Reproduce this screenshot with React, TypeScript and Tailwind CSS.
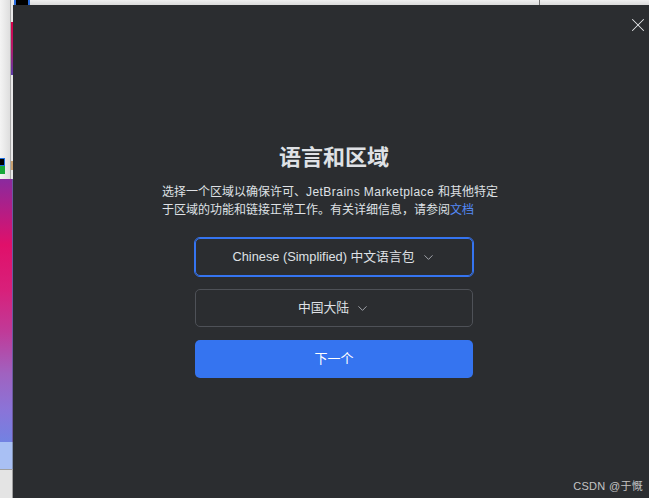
import { ChevronDown, X } from "lucide-react";

const font = "font-['Liberation_Sans','Noto_Sans_CJK_SC',sans-serif]";

const LeftStrip = () => {
  return (
    <div className="flex flex-col w-[13px] h-full shrink-0">
      <div className="flex h-[179px]">
        <div className="flex flex-col w-[10px] bg-[linear-gradient(to_right,#f4f4f4,#dedede)]">
          <div className="h-[158px]" />
          <div className="w-[5px] h-[8px] bg-black border border-[#1f6fe0] border-l-0" />
          <div className="w-[5px] h-[8px] bg-[#19a83a]" />
        </div>
        <div className="w-[1px] bg-[#a8a8a8]" />
        <div className="flex flex-col w-[2px] bg-[#e8e8e8]">
          <div className="h-[22px]" />
          <div className="h-[53px] bg-[linear-gradient(to_bottom,#d8004a,#b21a6a,#5b3aa8)]" />
          <div className="h-[86px]" />
          <div className="h-[9px] bg-[#c8a070]" />
        </div>
      </div>
      <div className="h-[263px] border-r border-[#6a5aa0] bg-[linear-gradient(to_bottom,#8a2a9e_0%,#e0106a_25%,#d8207a_42%,#c03a98_58%,#a062c0_74%,#8a74d8_88%,#7282e2_100%)]" />
      <div className="h-[27px] border-r border-[#8090b0] bg-[#a9c0f4]" />
      <div className="flex-1 border-t border-[#a0a0a0] border-r bg-[#e4e4e4]" />
    </div>
  );
};

const Dropdown = ({ label, focused }: { label: string; focused?: boolean }) => {
  return (
    <div
      className={
        focused
          ? "flex items-center justify-center gap-[6px] w-[278px] h-[38px] rounded-[5px] border border-[#3574f0] outline outline-1 outline-[#3574f0] text-[12.8px] text-[#dfe1e5]"
          : "flex items-center justify-center gap-[6px] w-[278px] h-[38px] rounded-[5px] border border-[#4e5157] text-[12.8px] text-[#dfe1e5]"
      }
    >
      <span>{label}</span>
      <ChevronDown size={15} strokeWidth={1.5} className="text-[#a8abb2]" />
    </div>
  );
};

export default function App() {
  return (
    <div className={`flex w-[649px] h-[498px] overflow-hidden bg-[#2b2d30] ${font}`}>
      <LeftStrip />
      <div className="flex flex-col flex-1 min-w-0">
        <div className="flex h-[5px] shrink-0 bg-[linear-gradient(to_bottom,#f0f0f0,#dadada)]">
          <div className="ml-[1px] w-[16px] bg-black border-x-2 border-[#2a6ee0]" />
          <div className="ml-[509px] w-[1px] bg-[#707070]" />
        </div>
        <div className="relative flex flex-col items-center flex-1 bg-[#2b2d30] pl-[6px] pt-[139px]">
          <button className="absolute top-[9px] right-[0px] text-[#e6e7ea]">
            <X size={22} strokeWidth={1.1} />
          </button>
          <h1 className="text-[22px] leading-[28px] font-bold text-[#dfe1e5]">语言和区域</h1>
          <p className="w-[344px] mt-[11px] text-[12px] leading-[18px] text-[#dfe1e5] whitespace-nowrap">
            选择一个区域以确保许可、<span className="tracking-[0.45px]">JetBrains Marketplace </span>和其他特定
            <br />
            于区域的功能和链接正常工作。有关详细信息，请参阅<span className="text-[#548af7]">文档</span>
          </p>
          <div className="flex flex-col gap-[13px] mt-[19px]">
            <Dropdown label="Chinese (Simplified) 中文语言包" focused />
            <Dropdown label="中国大陆" />
            <button className="w-[278px] h-[38px] rounded-[5px] bg-[#3574f0] text-[13px] text-white">
              下一个
            </button>
          </div>
          <span className="absolute right-[6px] bottom-[4px] text-[11px] text-[#c4c4c4] tracking-[0.3px]">
            CSDN @于慨
          </span>
        </div>
      </div>
    </div>
  );
}
